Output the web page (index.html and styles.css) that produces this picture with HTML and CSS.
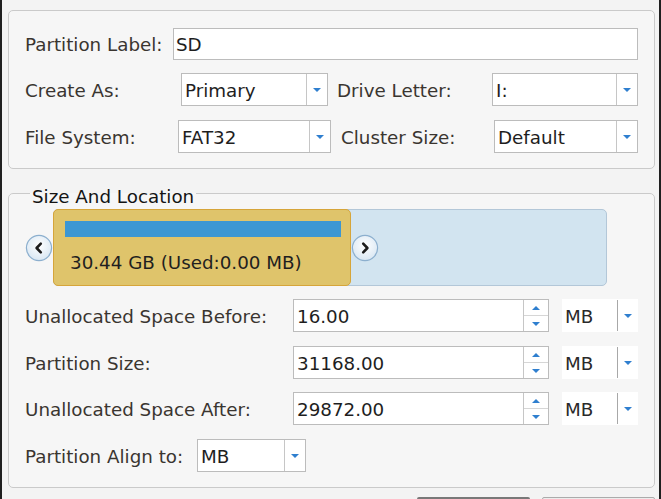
FILE: index.html
```html
<!DOCTYPE html>
<html lang="en">
<head>
<meta charset="utf-8">
<title>Create Partition</title>
<link rel="stylesheet" href="styles.css">
</head>
<body>
<div class="page">
  <section class="group group-top">
    <div class="row row-1">
      <span class="lbl w-plabel">Partition Label:</span>
      <div class="field grow"><span class="val">SD</span></div>
    </div>
    <div class="row row-2">
      <span class="lbl w-create">Create As:</span>
      <div class="field select w-create-sel"><span class="val">Primary</span><span class="btn"><i class="tri"></i></span></div>
      <span class="lbl w-drive">Drive Letter:</span>
      <div class="field select w-drive-sel"><span class="val">I:</span><span class="btn"><i class="tri"></i></span></div>
    </div>
    <div class="row row-3">
      <span class="lbl w-fs">File System:</span>
      <div class="field select w-fs-sel"><span class="val">FAT32</span><span class="btn"><i class="tri"></i></span></div>
      <span class="lbl w-cluster">Cluster Size:</span>
      <div class="field select w-cluster-sel"><span class="val">Default</span><span class="btn"><i class="tri"></i></span></div>
    </div>
  </section>

  <fieldset class="group group-size">
    <legend>Size And Location</legend>
    <div class="map">
      <svg class="nav" viewBox="0 0 28 28" width="28" height="28" aria-label="previous">
        <defs>
          <radialGradient id="gl" cx="50%" cy="40%" r="60%">
            <stop offset="0" stop-color="#ffffff"/>
            <stop offset="1" stop-color="#d9e7f3"/>
          </radialGradient>
        </defs>
        <circle cx="14" cy="14" r="12.6" fill="url(#gl)" stroke="#8cafce" stroke-width="1.2"/>
        <path d="M15.8 9.6 L11.6 14 L15.8 18.4" fill="none" stroke="#1c1c1c" stroke-width="2.6" stroke-linecap="round" stroke-linejoin="round"/>
      </svg>
      <div class="disk">
        <div class="part">
          <div class="usage"></div>
          <div class="part-text">30.44 GB (Used:0.00 MB)</div>
        </div>
        <svg class="nav" viewBox="0 0 28 28" width="28" height="28" aria-label="next">
          <defs>
            <radialGradient id="gr" cx="50%" cy="40%" r="60%">
              <stop offset="0" stop-color="#ffffff"/>
              <stop offset="1" stop-color="#d9e7f3"/>
            </radialGradient>
          </defs>
          <circle cx="14" cy="14" r="12.6" fill="url(#gr)" stroke="#8cafce" stroke-width="1.2"/>
          <path d="M12.2 9.6 L16.4 14 L12.2 18.4" fill="none" stroke="#1c1c1c" stroke-width="2.6" stroke-linecap="round" stroke-linejoin="round"/>
        </svg>
      </div>
    </div>

    <div class="lrow lrow-1">
      <span class="lbl w-long">Unallocated Space Before:</span>
      <div class="field spin-field"><span class="val">16.00</span><span class="spin"><span class="half"><i class="tri up"></i></span><span class="half"><i class="tri"></i></span></span></div>
      <div class="unit"><span class="val">MB</span><span class="ubtn"><i class="tri"></i></span></div>
    </div>
    <div class="lrow lrow-2">
      <span class="lbl w-long">Partition Size:</span>
      <div class="field spin-field"><span class="val">31168.00</span><span class="spin"><span class="half"><i class="tri up"></i></span><span class="half"><i class="tri"></i></span></span></div>
      <div class="unit"><span class="val">MB</span><span class="ubtn"><i class="tri"></i></span></div>
    </div>
    <div class="lrow lrow-3">
      <span class="lbl w-long">Unallocated Space After:</span>
      <div class="field spin-field"><span class="val">29872.00</span><span class="spin"><span class="half"><i class="tri up"></i></span><span class="half"><i class="tri"></i></span></span></div>
      <div class="unit"><span class="val">MB</span><span class="ubtn"><i class="tri"></i></span></div>
    </div>
    <div class="lrow lrow-4">
      <span class="lbl w-align">Partition Align to:</span>
      <div class="field select w-align-sel"><span class="val">MB</span><span class="btn"><i class="tri"></i></span></div>
    </div>
  </fieldset>

  <div class="actions">
    <button class="action primary" aria-label="OK"></button>
    <button class="action" aria-label="Cancel"></button>
  </div>
</div>
</body>
</html>
```
FILE: styles.css
```css
html {
  background: #1f1f1f;
}
body {
  margin: 0 2px;
  min-height: 100vh;
  background: #f3f3f3;
  font-family: "DejaVu Sans", sans-serif;
  font-size: 18.3px;
  color: #3a3530;
}
.page {
  padding: 10px 4px 0 6px;
}
.group {
  border: 1px solid #cacaca;
  border-radius: 5px;
  background: #f6f6f6;
}
.group-top {
  padding: 17px 16px 15px 16px;
}
.row {
  display: flex;
  align-items: center;
  height: 33px;
}
.row-1 { height: 32px; }
.row-2 { margin-top: 13px; }
.row-3 { margin-top: 14px; }

.lbl {
  flex: none;
  white-space: nowrap;
  line-height: 22px;
  padding-top: 2px;
}
.w-plabel { width: 148px; }
.w-create { width: 156px; }
.w-create-sel { width: 147px; }
.w-drive { width: 155px; margin-left: 9px; }
.w-drive-sel { width: 146px; }
.w-fs { width: 153px; }
.w-fs-sel { width: 153px; }
.w-cluster { width: 153px; margin-left: 10px; }
.w-cluster-sel { width: 144px; }
.w-long { width: 268px; }
.w-align { width: 172px; }
.w-align-sel { width: 109px; }

.field {
  box-sizing: border-box;
  height: 100%;
  background: #ffffff;
  border: 1px solid #bcbcbc;
  display: flex;
  align-items: stretch;
  flex: none;
  color: #1e1e1e;
}
.grow { flex: 1; }
.val {
  flex: 1;
  padding-left: 2px;
  padding-top: 2px;
  display: flex;
  align-items: center;
  white-space: nowrap;
  line-height: 22px;
}
.select .val { padding-left: 3px; }
.btn {
  width: 20px;
  flex: none;
  border-left: 1px solid #c6c6c6;
  display: flex;
  align-items: center;
  justify-content: center;
}
.tri {
  display: block;
  width: 0;
  height: 0;
  border-left: 4px solid transparent;
  border-right: 4px solid transparent;
  border-top: 4px solid #2f7fcf;
}
.tri.up {
  border-top: 0;
  border-bottom: 4px solid #2f7fcf;
}

/* Size and location */
.group-size {
  margin: 9px 0 0;
  padding: 0 16px 15px 16px;
  min-width: 0;
}
.group-size legend {
  margin-left: 5px;
  padding: 8px 2px 0;
  line-height: 22px;
  color: #141414;
}
.map {
  display: flex;
  align-items: center;
  margin-top: 1px;
  height: 77px;
}
.nav {
  display: block;
  flex: none;
  width: 28px;
  height: 28px;
}
.disk {
  box-sizing: border-box;
  width: 554px;
  height: 77px;
  display: flex;
  align-items: center;
  background: #d2e4f0;
  border: 1px solid #b3c7d8;
  border-radius: 5px;
}
.part {
  box-sizing: border-box;
  flex: none;
  width: 298px;
  height: 77px;
  margin: -1px 0 -1px -1px;
  padding: 11px 9px 0 11px;
  background: #dfc46b;
  border: 1px solid #d6a53a;
  border-radius: 5px;
}
.usage {
  height: 16px;
  background: #3c97d3;
}
.part-text {
  margin: 15px 0 0 5px;
  line-height: 22px;
  color: #1f1f1f;
  white-space: nowrap;
}

.lrow {
  display: flex;
  align-items: center;
  height: 33px;
}
.lrow-1 { margin-top: 13px; }
.lrow-2 { margin-top: 14px; }
.lrow-3 { margin-top: 13px; }
.lrow-4 { margin-top: 14px; }

.spin-field { width: 256px; }
.spin-field .val { padding-left: 3px; }
.spin {
  width: 24px;
  flex: none;
  border-left: 1px solid #c6c6c6;
  display: flex;
  flex-direction: column;
}
.half {
  flex: 1;
  display: flex;
  align-items: center;
  justify-content: center;
}
.half + .half {
  border-top: 1px solid #d6d6d6;
}
.unit {
  box-sizing: border-box;
  width: 76px;
  height: 100%;
  margin-left: 13px;
  background: #ffffff;
  display: flex;
  align-items: stretch;
  color: #2a2a2a;
}
.unit .val { padding-left: 3px; }
.ubtn {
  width: 20px;
  flex: none;
  margin: 1px 0;
  border-left: 1px solid #a8a8a8;
  display: flex;
  align-items: center;
  justify-content: center;
}

.actions {
  display: flex;
  justify-content: flex-end;
  gap: 12px;
  margin-top: 9px;
}
.action {
  width: 113px;
  height: 30px;
  font: inherit;
  background: #ececec;
  border: 1px solid #ababab;
  border-radius: 2px;
  color: #222;
}
.action.primary {
  border: 2px solid #787878;
}
```
